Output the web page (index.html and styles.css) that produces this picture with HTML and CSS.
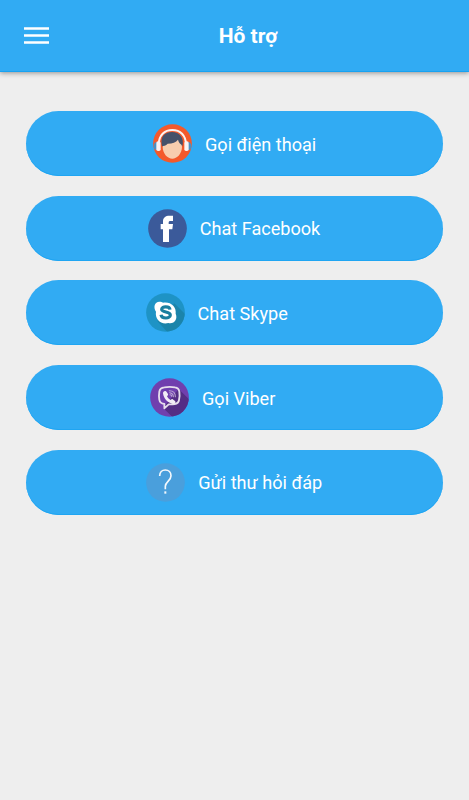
FILE: index.html
```html
<!DOCTYPE html>
<html lang="vi">
<head>
<meta charset="utf-8">
<title>Hỗ trợ</title>
<link rel="stylesheet" href="styles.css">
</head>
<body>
<header class="bar">
  <button class="menu" aria-label="Menu">
    <svg viewBox="0 0 25 17"><path d="M0 .2h25v2.600H0zM0 7.200h25v2.600H0zM0 14.200h25v2.600H0z" fill="#fff"/></svg>
  </button>
  <h1 class="title">Hỗ trợ</h1>
</header>
<main class="list">
  <a class="item phone">
    <svg class="icon" viewBox="0 0 117 117">
      <circle cx="58.500" cy="58.500" r="58" fill="#f4592b"/>
      <path d="M2 66q0-11 10-13v26Q2 77 2 66zM115 66q0-11-10-13v26q10-2 10-13z" fill="#4a90c4"/>
      <path d="M27 67C20 38 35 24 57 24s38 17 31 43z" fill="#46516a"/>
      <path d="M30 66c7-1 11-4 14-7 15 0 25-4 31-12 2 8 6 12 11 16l1 5c0 21-15 36-29 36S29 89 29 68z" fill="#f8cdae"/>
      <path d="M17 63C17 33 35 18 58 18s41 15 41 45" fill="none" stroke="#fbf3f2" stroke-width="6"/>
      <rect x="10" y="52" width="13" height="29" rx="5" fill="#fbf3f2"/>
      <rect x="94" y="52" width="13" height="29" rx="5" fill="#fbf3f2"/>
    </svg>
    <span>Gọi điện thoại</span>
  </a>
  <a class="item facebook">
    <svg class="icon" viewBox="0 0 117 117">
      <circle cx="58.500" cy="58.500" r="58" fill="#3b5a9a"/>
      <path d="M45 99V61H38V45h7v-8c0-11 8-17 19-17h11v16h-7c-5 0-6 2-6 6v3h13l-2 16H63v38z" fill="#fff"/>
    </svg>
    <span>Chat Facebook</span>
  </a>
  <a class="item skype">
    <svg class="icon" viewBox="0 0 117 117">
      <defs><clipPath id="sky"><circle cx="58.500" cy="58.500" r="58"/></clipPath></defs>
      <circle cx="58.500" cy="58.500" r="58" fill="#1e93c5"/>
      <path d="M85 31l42 42v54H73L34 84z" fill="#1b84aa" clip-path="url(#sky)"/>
      <path d="M40 26c5 0 8 1 11 3 23-4 41 12 38 33 7 16-4 32-22 28-22 6-41-12-37-34-9-14-4-30 10-30z" fill="#fff"/>
      <path d="M72 50c-1-11-25-11-25-1 0 11 26 5 26 17 0 12-26 12-28-1" fill="none" stroke="#1b7f9f" stroke-width="9.500"/>
    </svg>
    <span>Chat Skype</span>
  </a>
  <a class="item viber">
    <svg class="icon" viewBox="0 0 117 117">
      <defs><clipPath id="vib"><circle cx="58.500" cy="58.500" r="58"/></clipPath></defs>
      <circle cx="58.500" cy="58.500" r="58" fill="#703fae"/>
      <path d="M86 33l41 41v53H77L39 89z" fill="#542d84" clip-path="url(#vib)"/>
      <path d="M43 28q16-3 32 0c7 1 12 6 13 13q2 14-1 25c-1 7-6 11-13 12q-9 2-18 1L43 91V78c-9-1-14-6-15-13q-2-12 0-24c1-7 7-12 15-13z" fill="none" stroke="#e6deec" stroke-width="5.500" stroke-linejoin="round"/>
      <path d="M43 40c3-2 5-1 7 2l4 6c1 3-1 5-3 7 3 6 6 9 11 11 3-3 5-4 8-1l5 4c4 5-2 9-6 9-16-4-28-15-30-32 0-3 2-5 4-6z" fill="#f2edf5"/>
      <path d="M58 38c11 0 18 7 18 18M59 44c7 1 11 5 11 12M60 50c3 0 5 2 5 5" fill="none" stroke="#bda9d2" stroke-width="3.200" stroke-linecap="round"/>
    </svg>
    <span>Gọi Viber</span>
  </a>
  <a class="item mail">
    <svg class="icon" viewBox="0 0 117 117">
      <circle cx="58.500" cy="58.500" r="58" fill="#4a9fdc"/>
      <path d="M41 39c0-11 7-18 17-18s17 7 17 17c0 16-17 18-17 32v9" fill="none" stroke="#f4f8fc" stroke-width="5"/>
      <path d="M55 85h6v7h-6z" fill="#f4f8fc"/>
    </svg>
    <span>Gửi thư hỏi đáp</span>
  </a>
</main>
</body>
</html>
```
FILE: styles.css
```css
* {
  box-sizing: border-box;
}

body {
  margin: 0;
  min-height: 100vh;
  background: #eee;
  color: #fff;
  font-family: Roboto, sans-serif;
}

.bar {
  display: grid;
  grid-template-columns: 50px 1fr 23px;
  align-items: center;
  height: 72px;
  background: #31abf3;
  border-bottom: 1px solid #17a2f2;
  box-shadow: 0 1px 5px rgba(0, 0, 0, 0.4);
}

.menu {
  margin: 0 0 0 24px;
  padding: 0;
  width: 25px;
  height: 17px;
  border: 0;
  background: none;
}

.menu svg {
  display: block;
  width: 25px;
  height: 17px;
}

.title {
  margin: 0;
  padding-top: 1px;
  font-size: 21px;
  font-weight: 700;
  line-height: 24px;
  text-align: center;
}

.list {
  display: flex;
  flex-direction: column;
  gap: 19.7px;
  padding: 39px 26px;
}

.item {
  display: flex;
  align-items: center;
  gap: 13px;
  height: 65px;
  border-radius: 33px;
  background: #31abf3;
  box-shadow: inset 0 -1px 0 #1fa5f2;
  font-size: 18.1px;
  line-height: 24px;
  white-space: nowrap;
}

.item span {
  padding-top: 2px;
}

.icon {
  flex: none;
  width: 39px;
  height: 39px;
}

.phone {
  padding-left: 127px;
}

.facebook {
  padding-left: 121.700px;
}

.skype {
  padding-left: 119.600px;
}

.viber {
  padding-left: 124px;
}

.mail {
  padding-left: 120.300px;
}
```
